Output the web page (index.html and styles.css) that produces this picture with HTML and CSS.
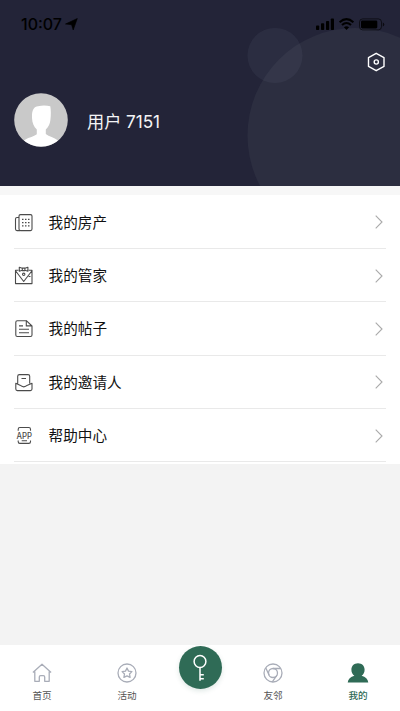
FILE: index.html
```html
<!DOCTYPE html>
<html lang="zh-CN">
<head>
<meta charset="utf-8">
<title>我的</title>
<link rel="stylesheet" href="styles.css">
</head>
<body>
<div class="app">
  <header class="hero">
    <svg class="hero-art" viewBox="0 0 400 186" aria-hidden="true">
      <circle cx="355" cy="135.500" r="107.500" fill="#2c2e40"/>
      <circle cx="275" cy="55.500" r="27.500" fill="#8890a8" fill-opacity=".09"/>
    </svg>
    <div class="status">
      <span class="time">10:07</span>
      <svg class="locate" width="13" height="13" viewBox="0 0 13 13"><path d="M12.300.500 8.200 12 6.600 6.700.500 6z" fill="#000" stroke="#000" stroke-width=".6" stroke-linejoin="round"/></svg>
      <svg class="signals" width="70" height="13" viewBox="0 0 70 13">
        <rect x="1" y="7.500" width="3.200" height="4.500" rx=".8"/>
        <rect x="6" y="5.300" width="3.200" height="6.700" rx=".8"/>
        <rect x="11" y="3" width="3.200" height="9" rx=".8"/>
        <rect x="15.800" y=".5" width="3.200" height="11.500" rx=".8"/>
        <path d="M24.600 4.200Q31.500-1.800 38.400 4.200M27 7Q31.500 3 36 7" fill="none" stroke="#000" stroke-width="2.100"/>
        <path d="M31.500 12 28.900 9.200Q31.500 7.200 34.100 9.200z"/>
        <rect x="44.500" y=".9" width="22" height="11" rx="3.200" fill="none" stroke="#000" stroke-opacity=".6"/>
        <rect x="46" y="2.400" width="16.300" height="8" rx="1.300"/>
        <path d="M67.800 4.500q1.500.500 1.500 2t-1.500 2z" fill-opacity=".7"/>
      </svg>
    </div>
    <div class="toolbar">
      <svg width="18" height="20" viewBox="0 0 18 20" fill="none" stroke="#fff" stroke-width="1.400" stroke-linejoin="round"><path d="M9.200 1.300 17 5.600V14.400L9.200 18.700 1.500 14.400V5.600z"/><circle cx="9.300" cy="10" r="2.100"/></svg>
    </div>
    <div class="profile">
      <svg class="avatar" viewBox="0 0 54 54">
        <circle cx="27" cy="27" r="26.800" fill="#c9c9c9"/>
        <path d="M10 47.500C14 44.500 20 43.500 22.800 41.200V36.500C19.800 33.500 18.200 30 18 25C17.700 16.500 20 13.800 24 13.200C29 12 33 12.500 36.300 13.200C37 17 37 22 36.400 27C36 31 34.500 34 31.800 36.500V41C35 43.500 40 44.500 44 47.500A26.800 26.800 0 0 1 10 47.500z" fill="#fff"/>
      </svg>
      <span class="username">用户 7151</span>
    </div>
  </header>

  <main class="menu">
    <div class="row">
      <svg class="icon" viewBox="0 0 20 20"><rect x="5" y="1.600" width="13" height="16" rx="1.500"/><path d="M5 4.500H3Q1.500 4.500 1.500 6V16Q1.500 17.600 3 17.600H6"/><path d="M8 6.300h1.500M11 6.300h1.500M14 6.300h1.500M8 9.600h1.500M11 9.600h1.500M14 9.600h1.500M8 12.900h1.500M11 12.900h1.500M14 12.900h1.500" stroke-width="1.300"/></svg>
      <span class="label">我的房产</span>
      <svg class="arrow" viewBox="0 0 8 14"><path d="M.7.700 7 7 .7 13.300"/></svg>
    </div>
    <div class="row">
      <svg class="icon" viewBox="0 0 20 20"><path d="M4.500 4.300H1.500V17.600H18V4.300H14.500M1.700 5 9.700 15.500 17.800 5"/><path d="M8.300 2.300 5.300 1.200V5.300L8.300 4.300M10.900 2.300 13.900 1.200V5.300L10.900 4.300M8.300 2.100h2.600v2.500H8.300z"/><circle cx="9.700" cy="8.300" r="1.200"/><path d="M14.500 10.500h2"/></svg>
      <span class="label">我的管家</span>
      <svg class="arrow" viewBox="0 0 8 14"><path d="M.7.700 7 7 .7 13.300"/></svg>
    </div>
    <div class="row">
      <svg class="icon" viewBox="0 0 20 20"><path d="M12.300 1.700H3.300Q1.800 1.700 1.800 3.200V16Q1.800 17.500 3.300 17.500H16.500Q18 17.500 18 16V7L12.300 1.700V6.900H18M5 6.900H9M5 10.300H15M5 13.800H15"/></svg>
      <span class="label">我的帖子</span>
      <svg class="arrow" viewBox="0 0 8 14"><path d="M.7.700 7 7 .7 13.300"/></svg>
    </div>
    <div class="row">
      <svg class="icon" viewBox="0 0 20 20"><path d="M3.700 10.500V3.300Q3.700 1.600 5.400 1.600H14Q15.700 1.600 15.700 3.300V10.500M7.500 5.500H12M1.800 10.300V16Q1.800 17.600 3.400 17.600H16.400Q18 17.600 18 16V10.300L13.500 12.200Q9.800 15.500 6 12.200z"/></svg>
      <span class="label">我的邀请人</span>
      <svg class="arrow" viewBox="0 0 8 14"><path d="M.7.700 7 7 .7 13.300"/></svg>
    </div>
    <div class="row">
      <svg class="icon" viewBox="0 0 20 20"><path d="M4.200 4.800V3.200Q4.200 1.500 5.900 1.500H14.800Q16.500 1.500 16.500 3.200V4.800M4.200 14.500V15.700Q4.200 17.400 5.900 17.400H14.800Q16.500 17.400 16.500 15.700V14.500M7.700 14.800H13"/><text x="10.200" y="12.500" text-anchor="middle" textLength="15.500" lengthAdjust="spacingAndGlyphs">APP</text></svg>
      <span class="label">帮助中心</span>
      <svg class="arrow" viewBox="0 0 8 14"><path d="M.7.700 7 7 .7 13.300"/></svg>
    </div>
  </main>

  <nav class="tabs">
    <div class="tab">
      <svg viewBox="0 0 20 20"><path d="M.9 9.500 10 1.200 19.100 9.500M2.800 8.500V18.300H7.300V14Q7.300 12.600 8.700 12.600H11.300Q12.700 12.600 12.700 14V18.300H17.200V8.500"/></svg>
      <span>首页</span>
    </div>
    <div class="tab">
      <svg viewBox="0 0 20 20"><circle cx="10" cy="10" r="9"/><path d="M10 5 11.500 8.100 14.900 8.600 12.500 11 13.100 14.400 10 12.800 6.900 14.400 7.500 11 5.100 8.600 8.500 8.100z"/></svg>
      <span>活动</span>
    </div>
    <div class="key">
      <svg viewBox="0 0 16 28"><circle cx="8" cy="7.500" r="5.900"/><path d="M8 13.400V26.800M8 20.800H11.800M8 24.800H11.800"/></svg>
    </div>
    <div class="tab">
      <svg viewBox="0 0 20 20"><circle cx="10" cy="10" r="9"/><circle cx="10" cy="10" r="4.500"/><path d="M10 5.500H17.800M2.800 5 6.200 12.300M14 12.200 9.300 18.800"/></svg>
      <span>友邻</span>
    </div>
    <div class="tab active">
      <svg viewBox="0 0 20 20"><path d="M10 .2C14 .2 16.600 3 16.600 6.700C16.600 9.500 15.400 11.500 13.600 12.700C17.500 13.700 20 16 20.300 19.600H-.3C0 16 2.500 13.700 6.400 12.700C4.600 11.500 3.400 9.500 3.400 6.700C3.400 3 6 .2 10 .2z"/></svg>
      <span>我的</span>
    </div>
  </nav>
</div>
</body>
</html>
```
FILE: styles.css
```css
* { box-sizing: border-box; }

body {
  margin: 0;
  background: #f3f3f3;
  font-family: Inter, "Noto Sans CJK SC", sans-serif;
}

svg { display: block; flex: none; }

.app {
  display: flex;
  flex-direction: column;
  width: 400px;
  height: 711px;
  overflow: hidden;
}

.hero {
  position: relative;
  height: 186px;
  flex: none;
  background: #232438;
}

.hero-art {
  position: absolute;
  inset: 0;
  width: 400px;
  height: 186px;
}

.status,
.toolbar,
.profile {
  position: relative;
  display: flex;
  align-items: center;
}

.status {
  height: 48px;
  padding: 0 15px 0 21px;
}

.time {
  width: 41px;
  font-size: 16px;
  font-weight: 500;
  white-space: nowrap;
}

.locate { margin-left: 3px; }
.signals { margin-left: auto; }

.toolbar {
  height: 28px;
  justify-content: flex-end;
  padding-right: 15px;
}

.profile {
  height: 54px;
  margin-top: 17px;
  padding-left: 14px;
}

.avatar {
  width: 54px;
  height: 54px;
}

.username {
  margin-left: 19px;
  padding-top: 3px;
  color: #f4f4f6;
  font-size: 17.2px;
  font-weight: 400;
  line-height: 24px;
  letter-spacing: -0.05px;
  white-space: nowrap;
}

.menu {
  flex: none;
  height: 278px;
  padding: 0 14px;
  border-top: 9px solid #f7f7f7;
  background: #fff;
}

.row {
  display: flex;
  align-items: center;
  height: 53.3px;
  padding-top: 1px;
  border-bottom: 1px solid #e9e9e9;
}

.row:first-child { height: 54px; }

.icon {
  width: 20px;
  height: 20px;
  margin-top: 1px;
  fill: none;
  stroke: #4b4b4b;
  stroke-width: 1.1;
  stroke-linejoin: round;
}

.icon text {
  fill: #4b4b4b;
  stroke: none;
  font-size: 8.5px;
  font-weight: 500;
}

.label {
  margin: 1px 0 0 14.6px;
  color: #111;
  font-size: 14.6px;
  line-height: 22px;
  white-space: nowrap;
}

.arrow {
  width: 8px;
  height: 14px;
  margin: 0 3px 0 auto;
  fill: none;
  stroke: #aaa;
  stroke-width: 1.1;
}

.tabs {
  display: grid;
  grid-template-columns: 84px 86px 60px 86px 84px;
  height: 66px;
  margin-top: auto;
  background: #fff;
}

.tab {
  display: flex;
  flex-direction: column;
  align-items: center;
  padding-top: 18px;
  color: #555;
  font-size: 9.6px;
  line-height: 16px;
}

.tab svg {
  width: 20px;
  height: 20px;
  margin-bottom: 5px;
  overflow: visible;
  fill: none;
  stroke: #a9adb8;
  stroke-width: 1.3;
  stroke-linejoin: round;
}

.tab.active {
  color: #2f6b56;
  font-weight: 500;
}

.tab.active svg {
  fill: #2f6b56;
  stroke: none;
}

.key {
  display: flex;
  align-items: center;
  justify-content: center;
  justify-self: center;
  width: 43px;
  height: 43px;
  margin-top: 1px;
  border-radius: 50%;
  background: #2f6b56;
  box-shadow: 0 2px 5px rgba(47, 107, 86, 0.16);
}

.key svg {
  width: 16px;
  height: 28px;
  fill: none;
  stroke: #fff;
  stroke-width: 1.5;
}
```
